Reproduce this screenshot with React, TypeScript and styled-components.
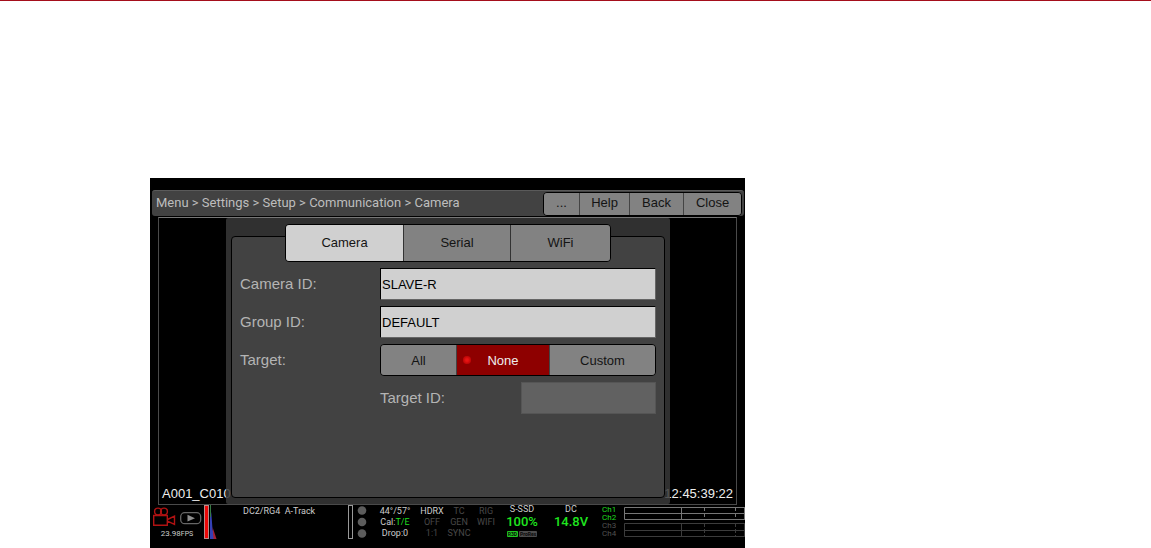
import React, { useState } from "react";
import styled, { createGlobalStyle, css } from "styled-components";

const GlobalStyle = createGlobalStyle`
  * { box-sizing: border-box; }
  body { margin: 0; background: #fff; font-family: "Liberation Sans", Arial, sans-serif; }
  button, input { font: inherit; color: inherit; margin: 0; }
`;

const Page = styled.main`
  border-top: 1px solid #a50e1b;
  padding: 177px 0 0 150px;
`;

const Monitor = styled.section`
  max-width: 595px;
  padding-top: 12px;
  background: #000;
  font-size: 13px;
`;

const TitleBar = styled.header`
  display: flex;
  align-items: center;
  justify-content: space-between;
  height: 26px;
  margin: 0 1px 1px 2px;
  padding: 0 2px 0 4px;
  background: #424242;
  border-top: 1px solid #5a5a5a;
  border-radius: 3px;
`;

const Breadcrumb = styled.h1`
  margin: 0;
  padding-bottom: 2px;
  font: 400 13px "Roboto", sans-serif;
  color: #bdbdbd;
  white-space: nowrap;
`;

const Actions = styled.nav`
  display: grid;
  grid-template-columns: 35px 50px 54px 58px;
  height: 24px;
  border: 1px solid #000;
  border-radius: 4px;
  overflow: hidden;
`;

const segment = css`
  display: flex;
  align-items: center;
  justify-content: center;
  padding: 0;
  border: 0;
  background: #828282;
  color: #141414;
`;

const ActionButton = styled.button`
  ${segment}
  padding-bottom: 2px;
  & + & { border-left: 1px solid #444; }
`;

const Video = styled.div`
  position: relative;
  height: 288px;
  margin: 0 8px;
  padding-top: 1px;
  border: 1px solid #4a4a4a;
  border-top-color: #777;
`;

const Readout = styled.span<{ $side: "left" | "right" }>`
  position: absolute;
  bottom: 3px;
  ${(p) => p.$side}: 3px;
  color: #eee;
`;

const Panel = styled.div`
  position: relative;
  display: flex;
  flex-direction: column;
  align-items: center;
  height: 286px;
  margin: -1px 66px 0 67px;
  padding: 6px 5px;
  background: rgba(56, 56, 56, 0.85);
  border-radius: 2px;
`;

const Tabs = styled.div`
  position: relative;
  z-index: 1;
  display: grid;
  grid-template-columns: 117px 107px 100px;
  height: 38px;
  border: 1px solid #000;
  border-radius: 4px;
  overflow: hidden;
`;

const Tab = styled.button<{ $active: boolean }>`
  ${segment}
  padding-bottom: 2px;
  background: ${(p) => (p.$active ? "#d0d0d0" : "#828282")};
  & + & { border-left: 1px solid #333; }
`;

const Form = styled.form`
  display: flex;
  flex-direction: column;
  gap: 6px;
  flex: 1;
  width: 100%;
  margin-top: -26px;
  padding: 31px 8px 0;
  background: #424242;
  border: 1px solid #000;
  border-radius: 4px;
`;

const Row = styled.div`
  display: grid;
  grid-template-columns: 140px 1fr;
  align-items: center;
  height: 32px;
`;

const TargetRow = styled(Row)`
  grid-template-columns: 141px 1fr;
  margin-left: 140px;
`;

const caption = css`
  padding-bottom: 2px;
  font-size: 15px;
  color: #b4b4b4;
`;

const Label = styled.label`
  ${caption}
`;

const Caption = styled.span`
  ${caption}
`;

const Field = styled.input`
  width: 100%;
  height: 32px;
  padding: 0 1px;
  border: 1px solid #000;
  border-right-color: #666;
  border-bottom-color: #666;
  border-radius: 0;
  background: #d0d0d0;
  color: #000;
  &:disabled { background: #616161; border-color: #555; }
`;

const Options = styled.div`
  display: grid;
  grid-template-columns: 75px 93px 1fr;
  height: 32px;
  border: 1px solid #000;
  border-radius: 4px;
  overflow: hidden;
`;

const Option = styled.label<{ $active: boolean }>`
  ${segment}
  position: relative;
  background: ${(p) => (p.$active ? "#8e0000" : "#828282")};
  color: ${(p) => (p.$active ? "#eee" : "#141414")};
  & + & { border-left: 1px solid #444; }
`;

const Radio = styled.input`
  position: absolute;
  left: 6px;
  width: 8px;
  height: 8px;
  appearance: none;
  border-radius: 50%;
  &:checked { background: radial-gradient(#e81414 20%, #c40808 60%); }
`;

const Status = styled.footer`
  display: grid;
  grid-template-columns: 54px 39px 105px 32px 38px 28px 26px 28px 44px 54px 26px 1fr;
  height: 43px;
  font: 9px/11px "Roboto", sans-serif;
  color: #ccc;
`;

const Mode = styled.div`
  display: flex;
  flex-direction: column;
  align-items: center;
  padding-top: 2px;
`;

const Rate = styled.span`
  font-size: 8px;
  line-height: 10px;
  small { font-size: 7px; }
`;

const Media = styled.span`
  padding-top: 1px;
  white-space: pre;
`;

const Stack = styled.div`
  display: flex;
  flex-direction: column;
  align-items: center;
  padding-top: 1px;
  white-space: nowrap;
`;

const Exposure = styled(Stack)`
  padding-right: 8px;
`;

const Line = styled.div<{ $off?: boolean }>`
  color: ${(p) => (p.$off ? "#484848" : "#ccc")};
`;

const Green = styled.span`
  color: #1fdc1f;
`;

const Gauge = styled.div`
  text-align: center;
  line-height: 9px;
`;

const Big = styled.div`
  font-size: 13px;
  font-weight: 500;
  line-height: 15px;
  color: #1fe61f;
`;

const Badges = styled.div`
  display: flex;
  justify-content: center;
  gap: 1px;
  margin-top: 2px;
`;

const Badge = styled.span<{ $on?: boolean }>`
  padding: 0 1px;
  border-radius: 1px;
  font: 700 5px/6px "Roboto", sans-serif;
  background: ${(p) => (p.$on ? "#1fc81f" : "#4c4c4c")};
  color: #0a0a0a;
`;

const Channels = styled.div`
  padding: 1px 0 0 4px;
  font-size: 8px;
  line-height: 8px;
`;

const Channel = styled.div<{ $on: boolean }>`
  color: ${(p) => (p.$on ? "#1fdc1f" : "#505050")};
`;

const ModeIcons = () => (
  <svg width="50" height="22" viewBox="0 0 50 22" fill="none">
    <g stroke="#b01212" strokeWidth="1.4">
      <circle cx="6" cy="4.5" r="3.4" />
      <circle cx="12" cy="4.5" r="3.4" />
      <path d="M1.7 8.5H15.3V18.3H1.7ZM15.5 12.5L22.5 9.2V17.3L15.5 14.2" />
    </g>
    <rect x="28.7" y="5.7" width="20" height="11" rx="4" stroke="#666" strokeWidth="1.3" />
    <path d="M35.5 7.8L43 11.2L35.5 14.6Z" fill="#8c8c8c" />
  </svg>
);

const Histogram = () => (
  <svg width="20" height="34" viewBox="0 0 20 34">
    <rect x="0.5" y="0.5" width="4" height="33" fill="#ec0808" stroke="#b98a8a" />
    <path d="M6 1V34H11L8.5 24L7.4 9Z" fill="#3440b4" />
    <path d="M8.5 22L12.5 34H9.5Z" fill="#a62034" />
    <path d="M6.5 0V12" stroke="#367a44" />
  </svg>
);

const Indicators = () => (
  <svg width="22" height="34" viewBox="0 0 22 34">
    <rect x="0.5" y="0.5" width="4" height="33" fill="none" stroke="#999" />
    <g fill="#5c5c5c">
      <circle cx="14" cy="5.5" r="4.3" />
      <circle cx="14" cy="17" r="4.3" />
      <circle cx="14" cy="28.5" r="4.3" />
    </g>
  </svg>
);

const Meters = () => (
  <svg width="121" height="34" viewBox="0 0 121 34" fill="none">
    <g stroke="#777">
      <path d="M121 2.5H0.5V14.5H121M0.5 8.5H121M57.5 2V15M120.5 2V15" />
      <path d="M80.5 2V15M111.5 2V15" strokeDasharray="4 2" />
    </g>
    <g stroke="#3c3c3c">
      <path d="M121 18.5H0.5V31.5H121M0.5 25.5H121M57.5 18V32M120.5 18V32" />
      <path d="M80.5 18V32M111.5 18V32" strokeDasharray="4 2" />
    </g>
  </svg>
);

const tabs = ["Camera", "Serial", "WiFi"];
const targets = ["All", "None", "Custom"];

export default function App() {
  const [tab, setTab] = useState("Camera");
  const [target, setTarget] = useState("None");
  const [cameraId, setCameraId] = useState("SLAVE-R");
  const [groupId, setGroupId] = useState("DEFAULT");

  return (
    <Page>
      <GlobalStyle />
      <Monitor>
        <TitleBar>
          <Breadcrumb>Menu &gt; Settings &gt; Setup &gt; Communication &gt; Camera</Breadcrumb>
          <Actions>
            {["...", "Help", "Back", "Close"].map((name) => (
              <ActionButton key={name} type="button">{name}</ActionButton>
            ))}
          </Actions>
        </TitleBar>
        <Video>
          <Readout $side="left">A001_C010</Readout>
          <Readout $side="right">12:45:39:22</Readout>
          <Panel>
            <Tabs role="tablist">
              {tabs.map((name) => (
                <Tab
                  key={name}
                  type="button"
                  role="tab"
                  aria-selected={tab === name}
                  $active={tab === name}
                  onClick={() => setTab(name)}
                >
                  {name}
                </Tab>
              ))}
            </Tabs>
            <Form>
              <Row>
                <Label htmlFor="camera-id">Camera ID:</Label>
                <Field id="camera-id" value={cameraId} onChange={(e) => setCameraId(e.target.value)} />
              </Row>
              <Row>
                <Label htmlFor="group-id">Group ID:</Label>
                <Field id="group-id" value={groupId} onChange={(e) => setGroupId(e.target.value)} />
              </Row>
              <Row>
                <Caption id="target-caption">Target:</Caption>
                <Options role="radiogroup" aria-labelledby="target-caption">
                  {targets.map((name) => (
                    <Option key={name} $active={target === name}>
                      <Radio
                        type="radio"
                        name="target"
                        checked={target === name}
                        onChange={() => setTarget(name)}
                      />
                      {name}
                    </Option>
                  ))}
                </Options>
              </Row>
              <TargetRow>
                <Label htmlFor="target-id">Target ID:</Label>
                <Field id="target-id" disabled={target !== "Custom"} />
              </TargetRow>
            </Form>
          </Panel>
        </Video>
        <Status>
          <Mode>
            <ModeIcons />
            <Rate>23.98<small>FPS</small></Rate>
          </Mode>
          <Histogram />
          <Media>DC2/RG4  A-Track</Media>
          <Indicators />
          <Exposure>
            <Line>44°/57°</Line>
            <Line>Cal:<Green>T/E</Green></Line>
            <Line>Drop:0</Line>
          </Exposure>
          <Stack>
            <Line>HDRX</Line>
            <Line $off>OFF</Line>
            <Line $off>1:1</Line>
          </Stack>
          <Stack>
            <Line $off>TC</Line>
            <Line $off>GEN</Line>
            <Line $off>SYNC</Line>
          </Stack>
          <Stack>
            <Line $off>RIG</Line>
            <Line $off>WIFI</Line>
          </Stack>
          <Gauge>
            <div>S-SSD</div>
            <Big>100%</Big>
            <Badges>
              <Badge $on>R3D</Badge>
              <Badge>ProRes</Badge>
            </Badges>
          </Gauge>
          <Gauge>
            <div>DC</div>
            <Big>14.8V</Big>
          </Gauge>
          <Channels>
            {[1, 2, 3, 4].map((n) => (
              <Channel key={n} $on={n < 3}>Ch{n}</Channel>
            ))}
          </Channels>
          <Meters />
        </Status>
      </Monitor>
    </Page>
  );
}
